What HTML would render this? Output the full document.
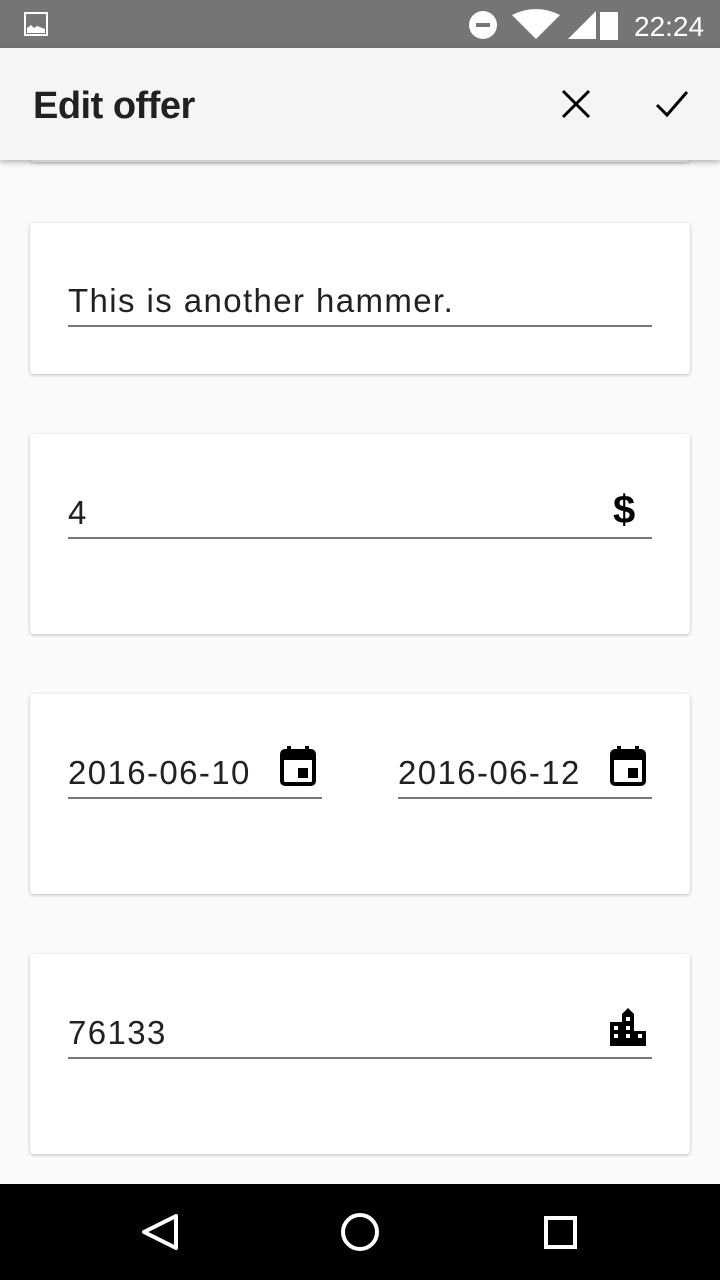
<!DOCTYPE html><html><head><style>
body{margin:0;width:720px;height:1280px;background:#fafafa;font-family:"Liberation Sans",sans-serif;position:relative;overflow:hidden}
.card{position:absolute;left:30px;width:660px;background:#fff;border-radius:3px;box-shadow:0 1px 3px rgba(0,0,0,.25)}
.f{position:absolute;border-bottom:2px solid #777;font-size:33px;color:#212121;height:46px;line-height:44px;letter-spacing:1.4px}
.ic{position:absolute}
</style></head><body>
<div style="position:absolute;top:0;left:0;width:720px;height:48px;background:#757575"></div>
<svg class="ic" style="left:24px;top:12px" width="24" height="24"><rect x="1" y="1" width="22" height="22" fill="none" stroke="#fff" stroke-width="2"/><path d="M3 21V16l4-3 3 3 3-2 8 3v4z" fill="#fff"/></svg>
<svg class="ic" style="left:466px;top:8px" width="240" height="34"><circle cx="17" cy="17" r="14" fill="#fff"/><rect x="10" y="15" width="14" height="4" fill="#757575"/><path d="M46 7q24-12 48 0L70 31z" fill="#fff"/><path d="M130 3v28h-28z" fill="#fff"/><rect x="134" y="4" width="18" height="28" fill="#fff"/><text x="168" y="28" font-size="28" fill="#fff" font-family="Liberation Sans">22:24</text></svg>
<div class="card" style="top:100px;height:62px"></div>
<div style="position:absolute;top:48px;left:0;width:720px;height:112px;background:#f5f5f5;box-shadow:0 2px 6px rgba(0,0,0,.3)"></div>
<div style="position:absolute;left:33px;top:85px;font-size:38px;color:#212121;font-weight:bold;letter-spacing:-0.5px">Edit offer</div>
<svg class="ic" style="left:560px;top:88px" width="32" height="32"><path d="M3 3L29 29M29 3L3 29" stroke="#000" stroke-width="3"/></svg>
<svg class="ic" style="left:654px;top:88px" width="36" height="32"><path d="M3 17l10 10L33 4" stroke="#000" stroke-width="3" fill="none"/></svg>
<div class="card" style="top:223px;height:151px"></div>
<div class="f" style="left:68px;top:279px;width:584px">This is another hammer.</div>
<div class="card" style="top:434px;height:200px"></div>
<div class="f" style="left:68px;top:491px;width:584px">4</div>
<div style="position:absolute;left:613px;top:488px;font-size:40px;font-weight:bold">$</div>
<div class="card" style="top:694px;height:200px"></div>
<div class="f" style="left:68px;top:751px;width:254px">2016-06-10</div>
<div class="f" style="left:398px;top:751px;width:254px">2016-06-12</div>
<svg class="ic" style="left:280px;top:746px" width="36" height="40"><rect x="2" y="5" width="32" height="33" rx="3" fill="none" stroke="#000" stroke-width="4"/><rect x="2" y="5" width="32" height="9" fill="#000"/><rect x="7" y="0" width="4" height="8" fill="#000"/><rect x="25" y="0" width="4" height="8" fill="#000"/><rect x="18" y="22" width="10" height="10" fill="#000"/></svg>
<svg class="ic" style="left:610px;top:746px" width="36" height="40"><rect x="2" y="5" width="32" height="33" rx="3" fill="none" stroke="#000" stroke-width="4"/><rect x="2" y="5" width="32" height="9" fill="#000"/><rect x="7" y="0" width="4" height="8" fill="#000"/><rect x="25" y="0" width="4" height="8" fill="#000"/><rect x="18" y="22" width="10" height="10" fill="#000"/></svg>
<div class="card" style="top:954px;height:200px"></div>
<div class="f" style="left:68px;top:1011px;width:584px">76133</div>
<svg class="ic" style="left:610px;top:1008px" width="36" height="38"><path d="M0 14h12V6l6-6 6 6v17h12v15H0z" fill="#000"/><g fill="#fff"><rect x="4" y="18" width="4" height="4"/><rect x="4" y="26" width="4" height="4"/><rect x="16" y="9" width="4" height="4"/><rect x="16" y="18" width="4" height="4"/><rect x="16" y="26" width="4" height="4"/><rect x="28" y="26" width="4" height="4"/></g></svg>
<div style="position:absolute;top:1184px;left:0;width:720px;height:96px;background:#000"></div>
<svg class="ic" style="left:0;top:1184px" width="720" height="96"><path d="M176 32L144 48l32 16z" fill="none" stroke="#fff" stroke-width="4" stroke-linejoin="round"/><circle cx="360" cy="48" r="17" fill="none" stroke="#fff" stroke-width="4"/><rect x="546" y="34" width="29" height="29" fill="none" stroke="#fff" stroke-width="4"/></svg>
</body></html>
